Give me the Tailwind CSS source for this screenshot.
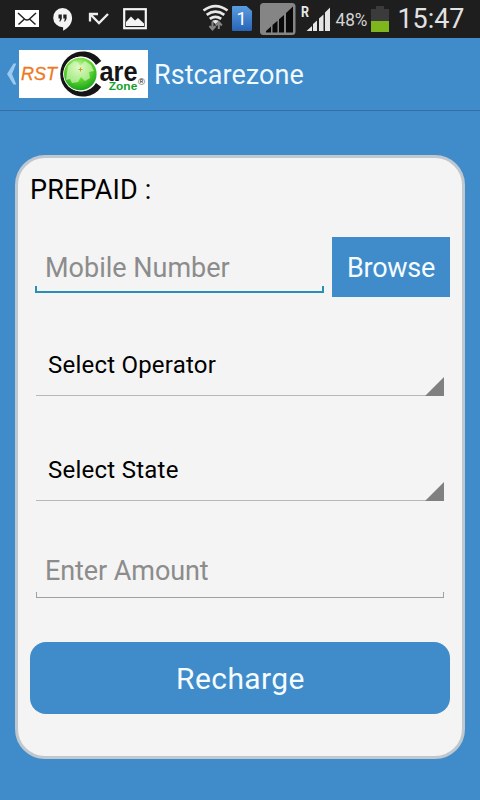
<!DOCTYPE html>
<html lang="en">
<head>
<meta charset="utf-8">
<title>Rstcarezone</title>
<script src="https://cdn.jsdelivr.net/npm/@tailwindcss/browser@4"></script>
</head>
<body class="w-[480px] h-[800px] overflow-hidden bg-[#408bca] font-['Roboto',sans-serif]">
<div class="flex flex-col w-[480px] h-[800px]">
  <header class="h-[38px] shrink-0 bg-[#1e1e1e]">
    <svg class="block" width="480" height="38" viewBox="0 0 480 38" font-family="Roboto, sans-serif">
      <!-- mail -->
      <rect x="15" y="10" width="24" height="17" fill="#fff"/>
      <path d="M18 13l6.500 6q2.500 2 5 0l6.500-6M18.500 24.500l6-5.500M35.500 24.500l-6-5.500" fill="none" stroke="#222" stroke-width="1.500"/>
      <!-- chat -->
      <path d="M62.500 8a9.600 9.600 0 0 1 9.600 9.800c0 5.700-3.300 9.700-9 13v-3.600A9.600 9.600 0 1 1 62.500 8z" fill="#f4f4f4"/>
      <path d="M58.500 14.500h3.300v4.300l-1.500 2.700h-1l.8-3h-1.600zM63.300 14.500h3.300v4.300l-1.500 2.700h-1l.8-3h-1.600z" fill="#222"/>
      <!-- missed call -->
      <path d="M90 21.500v-7.500h8M90.500 14.500l8.500 8.500 9-9" fill="none" stroke="#eee" stroke-width="2.300"/>
      <!-- picture -->
      <rect x="124.200" y="9.200" width="21.600" height="19" fill="none" stroke="#f4f4f4" stroke-width="2.200"/>
      <path d="M126 26v-4l5-5.500 4 4 3-2.500 6 5.500V26z" fill="#f4f4f4"/>
      <!-- wifi -->
      <g fill="none" stroke="#e8e8e8" stroke-width="2.700">
        <path d="M203.500 10.500q12-8.800 24 0M206.700 14.800q8.800-6.400 17.600 0M209.800 18.800q5.700-4 11.400 0"/>
      </g>
      <path d="M212 21q3.500-2 7 0l-3.500 3z" fill="#e8e8e8"/>
      <path d="M212.500 21.500v7M209.500 26l3 3.500 3-3.500M218.800 29v-6M215.800 25.500l3-3.500 3 3.500" fill="none" stroke="#858585" stroke-width="2"/>
      <!-- sim -->
      <defs>
        <linearGradient id="sim" x2="0" y2="1"><stop stop-color="#5a9de0"/><stop offset="1" stop-color="#2863b5"/></linearGradient>
        <radialGradient id="globe" cx=".45" cy=".3" r=".7"><stop stop-color="#d6f9b8"/><stop offset=".5" stop-color="#68d936"/><stop offset="1" stop-color="#1aa51a"/></radialGradient>
      </defs>
      <path d="M233 6h13.500l5.500 5v18.500a1.500 1.500 0 0 1-1.500 1.500H233a1 1 0 0 1-1-1V7a1 1 0 0 1 1-1z" fill="url(#sim)"/>
      <text x="236.500" y="25" font-size="18" fill="#fff">1</text>
      <!-- signal, sim 1 -->
      <rect x="260" y="3" width="35.500" height="32" rx="3.500" fill="#858585"/>
      <path d="M266 32.500v-1.500l5-4.500v6zM272.500 32.500v-7.500l5-4.300v11.800zM279 32.500V19.300l5-4.300v17.500zM286 32.500v-19.500l7-6.500v26z" fill="#0a0a0a"/>
      <!-- signal, sim 2 -->
      <text x="301" y="17" font-size="14" font-weight="700" fill="#e8e8e8" textLength="8" lengthAdjust="spacingAndGlyphs">R</text>
      <path d="M306.500 31l5.500-5v5zM313 31v-7l4-3.500V31zM319 31V18.500l4.500-4V31zM325 31V12.500l5-5V31z" fill="#e5e5e5"/>
      <text x="335.500" y="26" font-size="18" fill="#d4d4d4" textLength="32" lengthAdjust="spacingAndGlyphs">48%</text>
      <!-- battery -->
      <path d="M376 6h8v3h5v12h-18V9h5z" fill="#3b3b3b"/>
      <path d="M371 21h18v11h-18z" fill="#7fb51d"/>
      <text x="397.500" y="27.800" font-size="27" fill="#e2e2e2" textLength="67" lengthAdjust="spacingAndGlyphs">15:47</text>
    </svg>
  </header>

  <nav class="flex items-center h-[73px] shrink-0 border-b border-[#336fa5] pl-[6px]">
    <svg width="142" height="48" viewBox="6 50 142 48" font-family="Liberation Sans, sans-serif">
      <path d="M13.500 63.500h2.800l-4.300 10.500 4.300 10.500h-2.800L7 74z" fill="#9cc9ee"/>
      <rect x="19" y="50" width="129" height="48" fill="#fff"/>
      <path d="M101.300 61A22.600 22.600 0 1 0 101.300 87L96 83A17.500 17.500 0 1 1 96 65z" fill="#151515"/>
      <circle cx="80.500" cy="74" r="17.300" fill="#fff"/>
      <circle cx="80.300" cy="74" r="16.300" fill="url(#globe)"/>
      <path d="M68 66l6-5 4 1 2 4 5-5 6 4 3 6-5 1 1 6-5 3-4-4-3 5-6 1-2-4-4 1z" fill="#e5fbd0" fill-opacity=".6"/>
      <path d="M80.500 67.500v4M78.500 69.500h4" stroke="#d09a36" stroke-width="1"/>
      <text x="21" y="79.500" font-size="17.500" font-style="italic" fill="#ed7a23" stroke="#ed7a23" stroke-width=".3" textLength="36" lengthAdjust="spacingAndGlyphs">RST</text>
      <text x="99.500" y="80.500" font-size="27" font-weight="700" fill="#151515" textLength="38" lengthAdjust="spacingAndGlyphs">are</text>
      <text x="108.800" y="89.500" font-size="11.500" font-weight="700" fill="#16a02c" textLength="28.500" lengthAdjust="spacingAndGlyphs">Zone</text>
      <text x="138" y="84.500" font-size="9.500" fill="#222">®</text>
    </svg>
    <h1 class="ml-[6px] mt-[2px] text-[27px] leading-9 tracking-[0.05px] text-[#f0faff]">Rstcarezone</h1>
  </nav>

  <main class="mt-[44px] mx-[15px] h-[604px] shrink-0 rounded-[30px] border-[3px] border-[#c0c8cf] bg-[#f4f4f4] px-3 pt-[14px] flex flex-col">
    <h2 class="text-[27px] leading-9 text-black h-9 whitespace-nowrap"><span class="tracking-[0.15px]">PREPAID :</span></h2>

    <div class="mt-[29px] flex h-[60px]">
      <div class="relative ml-[5px] w-[289px] h-[56px] border-b-2 border-[#2790b4] pl-[10px] pt-[13px] text-[27px] leading-9 text-[#8c8c8c] whitespace-nowrap">
        <span>Mobile Number</span>
        <i class="absolute left-0 bottom-0 h-[5px] w-[2px] bg-[#2790b4]"></i>
        <i class="absolute right-0 bottom-0 h-[5px] w-[2px] bg-[#2790b4]"></i>
      </div>
      <button class="ml-2 w-[118px] h-[60px] bg-[#408bca] text-[27px] leading-9 tracking-[-0.25px] text-[#f4fcff] pt-[2px]">Browse</button>
    </div>

    <div class="relative mt-[49px] mx-[6px] h-[50px] border-b border-[#b8b8b8] pl-[12px] pt-[1px] text-[24px] leading-9 tracking-[0.22px] text-black">
      <span>Select Operator</span>
      <svg class="absolute right-0 -bottom-px" width="19" height="19"><path d="M19 0v19H0z" fill="#808080"/></svg>
    </div>
    <div class="relative mt-[55px] mx-[6px] h-[50px] border-b border-[#b8b8b8] pl-[12px] pt-[1px] text-[24px] leading-9 tracking-[0.25px] text-black">
      <span>Select State</span>
      <svg class="absolute right-0 -bottom-px" width="19" height="19"><path d="M19 0v19H0z" fill="#808080"/></svg>
    </div>

    <div class="relative mt-[47px] mx-[6px] h-[50px] border-b border-[#a0a0a0] pl-[9px] pt-[5px] text-[27px] leading-9 tracking-[-0.08px] text-[#8c8c8c]">
      <span>Enter Amount</span>
      <i class="absolute left-0 bottom-0 h-[5px] w-px bg-[#a0a0a0]"></i>
      <i class="absolute right-0 bottom-0 h-[5px] w-px bg-[#a0a0a0]"></i>
    </div>

    <button class="mt-[44px] h-[72px] shrink-0 rounded-[16px] bg-[#408bca] text-[30px] leading-9 tracking-[0.4px] text-[#f4fcff] pt-[2px] pl-px">Recharge</button>
  </main>
</div>
</body>
</html>
